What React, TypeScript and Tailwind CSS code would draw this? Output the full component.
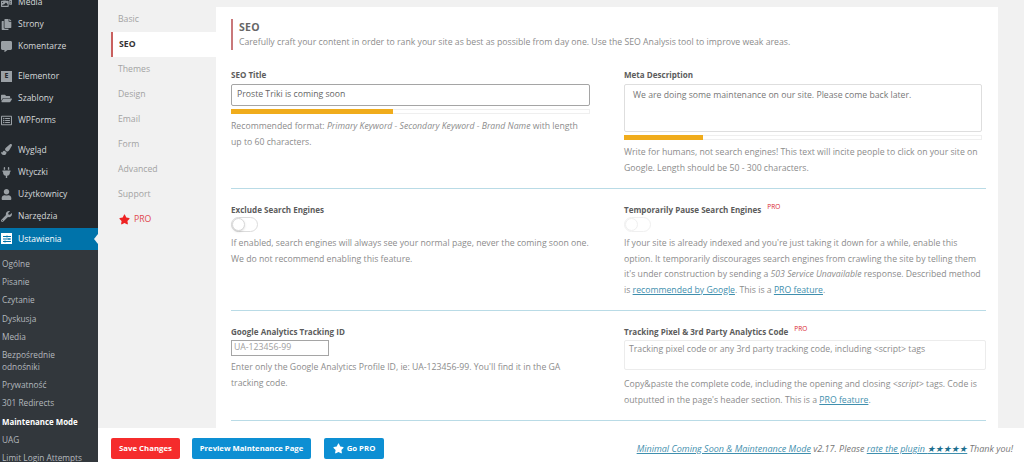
import { FaCommentAlt, FaCopy, FaFolderOpen, FaPaintBrush, FaPhotoVideo, FaPlug, FaRegListAlt, FaSlidersH, FaStar, FaUser, FaWrench } from "react-icons/fa";
import type { ReactNode } from "react";

const font = { fontFamily: '"Open Sans", sans-serif' };

function MenuItem({ icon, label }: { icon: ReactNode; label: string }) {
    return (
        <div className="flex h-[22.3px] items-center text-[8.5px] text-[#d5d8da]">
            <span className="flex w-[18px] shrink-0 items-center pl-[1px] text-[11px] text-[#9aa0a5]">{icon}</span>
            {label}
        </div>
    );
}

function Tab({ label }: { label: string }) {
    return <div className="flex h-[24.95px] items-center pl-[7px] text-[8.7px] text-[#a3a3a3]">{label}</div>;
}

function Label({ children, pro }: { children: ReactNode; pro?: boolean }) {
    return (
        <div className="flex h-[15px] items-center pt-[2px] text-[8.05px] font-bold text-[#5c5c5c]">
            {children}
            {pro && <sup className="relative -top-[4px] ml-[6px] text-[6.5px] font-normal text-[#d9262e]">PRO</sup>}
        </div>
    );
}

function Help({ children }: { children: ReactNode }) {
    return <p className="text-[8.7px] leading-[15.5px] text-[#8c8c8c]">{children}</p>;
}

function Toggle({ disabled }: { disabled?: boolean }) {
    return (
        <div className={`flex h-[15px] w-[27px] items-center rounded-full border bg-white ${disabled ? "border-[#f0f0f0]" : "border-[#dcdcdc]"}`}>
            <div className={`h-[13px] w-[13px] rounded-full border bg-white ${disabled ? "border-[#efefef]" : "border-[#d8d8d8] shadow-sm"}`} />
        </div>
    );
}

function Progress({ width }: { width: string }) {
    return (
        <div className="h-[5px] border border-[#efefef]">
            <div className={`-m-px h-[5px] bg-[#f0ac1c] ${width}`} />
        </div>
    );
}

function Link({ children }: { children: ReactNode }) {
    return <span className="text-[#3f8fae] underline">{children}</span>;
}

export default function App() {
    return (
        <div className="flex h-[462px] w-[1024px] overflow-hidden bg-[#f1f1f1]" style={font}>
            {/* Меню WordPress */}
            <aside className="flex w-[98px] shrink-0 flex-col overflow-hidden bg-[#23282d]">
                <div className="-mt-[9px]">
                    <MenuItem icon={<FaPhotoVideo />} label="Media" />
                    <MenuItem icon={<FaCopy />} label="Strony" />
                    <MenuItem icon={<FaCommentAlt />} label="Komentarze" />
                </div>
                <div className="mt-[7px]">
                    <MenuItem
                        icon={<span className="flex h-[11px] w-[11px] items-center justify-center bg-[#9aa0a5] text-[7px] font-bold text-[#23282d]">E</span>}
                        label="Elementor"
                    />
                    <MenuItem icon={<FaFolderOpen />} label="Szablony" />
                    <MenuItem icon={<FaRegListAlt />} label="WPForms" />
                </div>
                <div className="mt-[7px]">
                    <MenuItem icon={<FaPaintBrush />} label="Wygląd" />
                    <MenuItem icon={<FaPlug />} label="Wtyczki" />
                    <MenuItem icon={<FaUser />} label="Użytkownicy" />
                    <MenuItem icon={<FaWrench />} label="Narzędzia" />
                </div>
                <div className="relative flex h-[22px] shrink-0 items-center bg-[#0073aa] text-[8.5px] text-white">
                    <span className="ml-[1px] mr-[6px] flex h-[11px] w-[11px] items-center justify-center bg-white text-[8px] text-[#0073aa]">
                        <FaSlidersH />
                    </span>
                    Ustawienia
                    <span className="absolute right-0 top-[6px] border-y-[5px] border-r-[4px] border-y-transparent border-r-[#f1f1f1]" />
                </div>
                <div className="flex-1 bg-[#32373c] pl-[2px] pt-[5px] text-[8.3px] leading-[12px] text-[#b4b9be]">
                    <div className="py-[3.1px]">Ogólne</div>
                    <div className="py-[3.1px]">Pisanie</div>
                    <div className="py-[3.1px]">Czytanie</div>
                    <div className="py-[3.1px]">Dyskusja</div>
                    <div className="py-[3.1px]">Media</div>
                    <div className="w-[60px] py-[3.1px]">Bezpośrednie odnośniki</div>
                    <div className="py-[3.1px]">Prywatność</div>
                    <div className="py-[3.1px]">301 Redirects</div>
                    <div className="py-[3.1px] text-[7.9px] font-bold text-white">Maintenance Mode</div>
                    <div className="py-[3.1px]">UAG</div>
                    <div className="whitespace-nowrap py-[3.1px]">Limit Login Attempts</div>
                </div>
            </aside>

            <div className="flex min-w-0 flex-1 flex-col">
                <div className="flex h-[428px] overflow-hidden">
                    {/* Вкладки */}
                    <nav className="ml-[13px] w-[105px] shrink-0 pt-[7px]">
                        <Tab label="Basic" />
                        <div className="flex h-[25px] items-center border-l-2 border-[#c9605f] bg-white pl-[6px] text-[8.7px] font-bold text-[#333]">SEO</div>
                        <Tab label="Themes" />
                        <Tab label="Design" />
                        <Tab label="Email" />
                        <Tab label="Form" />
                        <Tab label="Advanced" />
                        <Tab label="Support" />
                        <div className="flex h-[24.95px] items-center pl-[8px] text-[8.7px] text-[#e0474c]">
                            <FaStar className="mr-[4px] text-[11px] text-[#ee2222]" />
                            PRO
                        </div>
                    </nav>

                    {/* Карточка SEO */}
                    <main className="mt-[7px] h-[500px] w-[782px] shrink-0 bg-white pl-[15px] pt-[12px]">
                        <div className="flex h-[31px] w-[755px] flex-col justify-center border-l-2 border-[#c9787a] pl-[6px]">
                            <div className="text-[10.5px] font-bold leading-[15px] tracking-[0.3px] text-[#666]">SEO</div>
                            <div className="text-[8.7px] leading-[15px] text-[#8c8c8c]">
                                Carefully craft your content in order to rank your site as best as possible from day one. Use the SEO Analysis tool to improve weak areas.
                            </div>
                        </div>

                        <div className="mt-[17px] grid h-[122px] w-[755px] grid-cols-[362px_362px] gap-x-[31px] border-b border-[#b9dbe6]">
                            <div>
                                <Label>SEO Title</Label>
                                <div className="mt-[2px] flex h-[22px] w-[359px] items-center rounded-[2px] border border-[#a5a5a5] pl-[5px] text-[8.7px] text-[#666]">
                                    Proste Triki is coming soon
                                </div>
                                <div className="mt-[3px] w-[359px]"><Progress width="w-[162px]" /></div>
                                <div className="mt-[5px] w-[355px]">
                                    <Help>
                                        Recommended format: <em>Primary Keyword - Secondary Keyword - Brand Name</em> with length up to 60 characters.
                                    </Help>
                                </div>
                            </div>
                            <div>
                                <Label>Meta Description</Label>
                                <div className="mt-[2px] h-[48px] w-[358px] rounded-[2px] border border-[#dedede] pl-[8px] pt-[3px] text-[8.7px] leading-[15px] text-[#777]">
                                    We are doing some maintenance on our site. Please come back later.
                                </div>
                                <div className="mt-[3px] w-[358px]"><Progress width="w-[79px]" /></div>
                                <div className="mt-[5px]">
                                    <Help>
                                        Write for humans, not search engines! This text will incite people to click on your site on Google. Length should be 50 - 300 characters.
                                    </Help>
                                </div>
                            </div>
                        </div>

                        <div className="grid h-[122px] w-[755px] grid-cols-[362px_362px] gap-x-[31px] border-b border-[#b9dbe6] pt-[13px]">
                            <div>
                                <Label>Exclude Search Engines</Label>
                                <Toggle />
                                <div className="mt-[4px]">
                                    <Help>
                                        If enabled, search engines will always see your normal page, never the coming soon one. We do not recommend enabling this feature.
                                    </Help>
                                </div>
                            </div>
                            <div>
                                <Label pro>Temporarily Pause Search Engines</Label>
                                <Toggle disabled />
                                <div className="mt-[4px]">
                                    <Help>
                                        If your site is already indexed and you're just taking it down for a while, enable this option. It temporarily discourages search engines from crawling the site by telling them it's under construction by sending a <em>503 Service Unavailable</em> response. Described method is <Link>recommended by Google</Link>. This is a <Link>PRO feature</Link>.
                                    </Help>
                                </div>
                            </div>
                        </div>

                        <div className="grid h-[110px] w-[755px] grid-cols-[362px_362px] gap-x-[31px] border-b border-[#b9dbe6] pt-[13px]">
                            <div>
                                <Label>Google Analytics Tracking ID</Label>
                                <div className="mt-[1px] flex h-[16px] w-[98px] items-center border border-[#a5a5a5] pl-[2px] text-[8.7px] text-[#a0a0a0]">UA-123456-99</div>
                                <div className="mt-[4px]">
                                    <Help>
                                        Enter only the Google Analytics Profile ID, ie: UA-123456-99. You'll find it in the GA tracking code.
                                    </Help>
                                </div>
                            </div>
                            <div>
                                <Label pro>Tracking Pixel &amp; 3rd Party Analytics Code</Label>
                                <div className="mt-[1px] h-[30px] rounded-[2px] border border-[#ececec] pl-[4px] pt-[1px] text-[8.7px] leading-[15px] text-[#8c8c8c]">
                                    Tracking pixel code or any 3rd party tracking code, including &lt;script&gt; tags
                                </div>
                                <div className="mt-[7px]">
                                    <Help>
                                        Copy&amp;paste the complete code, including the opening and closing <em>&lt;script&gt;</em> tags. Code is outputted in the page's header section. This is a <Link>PRO feature</Link>.
                                    </Help>
                                </div>
                            </div>
                        </div>
                    </main>
                </div>

                {/* Нижняя панель */}
                <footer className="flex h-[34px] items-start bg-white pl-[13px] pt-[10px]">
                    <button className="h-[21px] w-[69px] rounded-[2px] bg-[#f52c2c] text-[7.8px] font-bold text-white">Save Changes</button>
                    <button className="ml-[12px] h-[21px] w-[119px] rounded-[2px] bg-[#0d8fd3] text-[7.7px] font-bold text-white">Preview Maintenance Page</button>
                    <button className="ml-[13px] flex h-[21px] w-[60px] items-center justify-center rounded-[2px] bg-[#0d8fd3] text-[7.8px] font-bold text-white">
                        <FaStar className="mr-[3px] text-[11px]" />
                        Go PRO
                    </button>
                    <div className="ml-auto mr-[11px] whitespace-nowrap pt-[3px] text-[9px] italic leading-[15px] text-[#777]">
                        <Link>Minimal Coming Soon &amp; Maintenance Mode</Link> v2.17. Please <Link>rate the plugin <span className="text-[#1b6f8f]">★★★★★</span></Link> Thank you!
                    </div>
                </footer>
            </div>
        </div>
    );
}
